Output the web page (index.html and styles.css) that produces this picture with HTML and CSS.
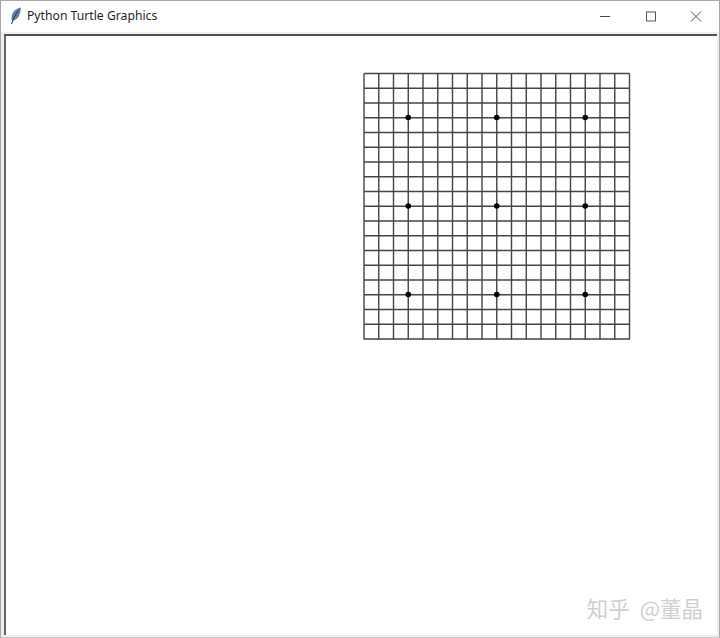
FILE: index.html
```html
<!DOCTYPE html>
<html lang="zh">
<head>
<meta charset="utf-8">
<title>Python Turtle Graphics</title>
<link rel="stylesheet" href="styles.css">
</head>
<body>
<div class="window">
  <header class="titlebar">
    <svg class="feather" width="12" height="18" viewBox="0 0 12 18" aria-hidden="true">
      <path d="M10.8 0.4C7.2 0.8 3.4 3.6 2.2 7.2 1.4 9.8 1.4 12.2 2 13.8 5.6 13.4 8.4 10.8 9.6 7.4 10.4 5.2 11 2.6 10.8 0.4Z" fill="#5f7ea8"/>
      <path d="M8.6 3.4C6 6.4 3.4 10.6 1.6 17" fill="none" stroke="#2c3542" stroke-width="1"/>
    </svg>
    <span class="title">Python Turtle Graphics</span>
    <div class="controls">
      <svg class="ctl" width="46" height="30" viewBox="0 0 46 30" aria-hidden="true"><path d="M19 15.5H29" stroke="#444" stroke-width="1"/></svg>
      <svg class="ctl" width="46" height="30" viewBox="0 0 46 30" aria-hidden="true"><rect x="19.5" y="11" width="9" height="9" fill="none" stroke="#555" stroke-width="1"/></svg>
      <svg class="ctl" width="46" height="30" viewBox="0 0 46 30" aria-hidden="true"><path d="M18 10.5L28 20.5M28 10.5L18 20.5" stroke="#555" stroke-width="1"/></svg>
    </div>
  </header>
  <main class="canvas">
    <svg class="board" width="268" height="268" viewBox="0 0 268 268" aria-hidden="true">
      <g class="lines">
        <path d="M1 1.5V267.5M15.75 1.5V267.5M30.5 1.5V267.5M45.25 1.5V267.5M60 1.5V267.5M74.75 1.5V267.5M89.5 1.5V267.5M104.25 1.5V267.5M119 1.5V267.5M133.75 1.5V267.5M148.5 1.5V267.5M163.25 1.5V267.5M178 1.5V267.5M192.75 1.5V267.5M207.5 1.5V267.5M222.25 1.5V267.5M237 1.5V267.5M251.75 1.5V267.5M266.5 1.5V267.5"/>
        <path d="M1 1.5H266.5M1 16.25H266.5M1 31H266.5M1 45.75H266.5M1 60.5H266.5M1 75.25H266.5M1 90H266.5M1 104.75H266.5M1 119.5H266.5M1 134.25H266.5M1 149H266.5M1 163.75H266.5M1 178.5H266.5M1 193.25H266.5M1 208H266.5M1 222.75H266.5M1 237.5H266.5M1 252.25H266.5M1 267H266.5"/>
      </g>
      <g class="stars">
        <circle cx="45.25" cy="45.5" r="2.8"/><circle cx="133.75" cy="45.5" r="2.8"/><circle cx="222.25" cy="45.5" r="2.8"/>
        <circle cx="45.25" cy="134" r="2.8"/><circle cx="133.75" cy="134" r="2.8"/><circle cx="222.25" cy="134" r="2.8"/>
        <circle cx="45.25" cy="222.5" r="2.8"/><circle cx="133.75" cy="222.5" r="2.8"/><circle cx="222.25" cy="222.5" r="2.8"/>
      </g>
    </svg>
    <div class="watermark"><span class="wm-brand">知乎</span><span>@董晶</span></div>
  </main>
</div>
</body>
</html>
```
FILE: styles.css
```css
* { box-sizing: border-box; }
html, body { margin: 0; padding: 0; }
body { width: 720px; height: 638px; overflow: hidden; background: #f0f0f0; }
.window {
  width: 720px;
  height: 638px;
  display: flex;
  flex-direction: column;
  border: 1px solid #a8a8a8;
  border-bottom-color: #c8c8c8;
  background: #eeeeee;
}
.titlebar {
  height: 31px;
  flex: none;
  display: flex;
  align-items: center;
  background: #ffffff;
  padding: 0 0 2px 9px;
}
.feather { flex: none; }
.title {
  margin-left: 5px;
  font: 12.2px/16px "Noto Sans", "Liberation Sans", sans-serif;
  color: #1f1f1f;
}
.controls { margin-left: auto; display: flex; }
.ctl { display: block; }
.canvas {
  position: relative;
  flex: 1;
  margin: 2px 2px 2px 3px;
  background: #ffffff;
  border-top: 2px solid #505050;
  border-left: 2px solid #666666;
  padding: 36px 0 0 357px;
}
.board { display: block; }
.lines path { fill: none; stroke: #444444; stroke-width: 1.4; }
.stars circle { fill: #000000; }
.watermark {
  position: absolute;
  right: 14px;
  bottom: 13px;
  display: flex;
  gap: 10px;
  font: 21.5px/28px "Noto Sans CJK SC", sans-serif;
  color: #cfcfcf;
  white-space: nowrap;
}
```
